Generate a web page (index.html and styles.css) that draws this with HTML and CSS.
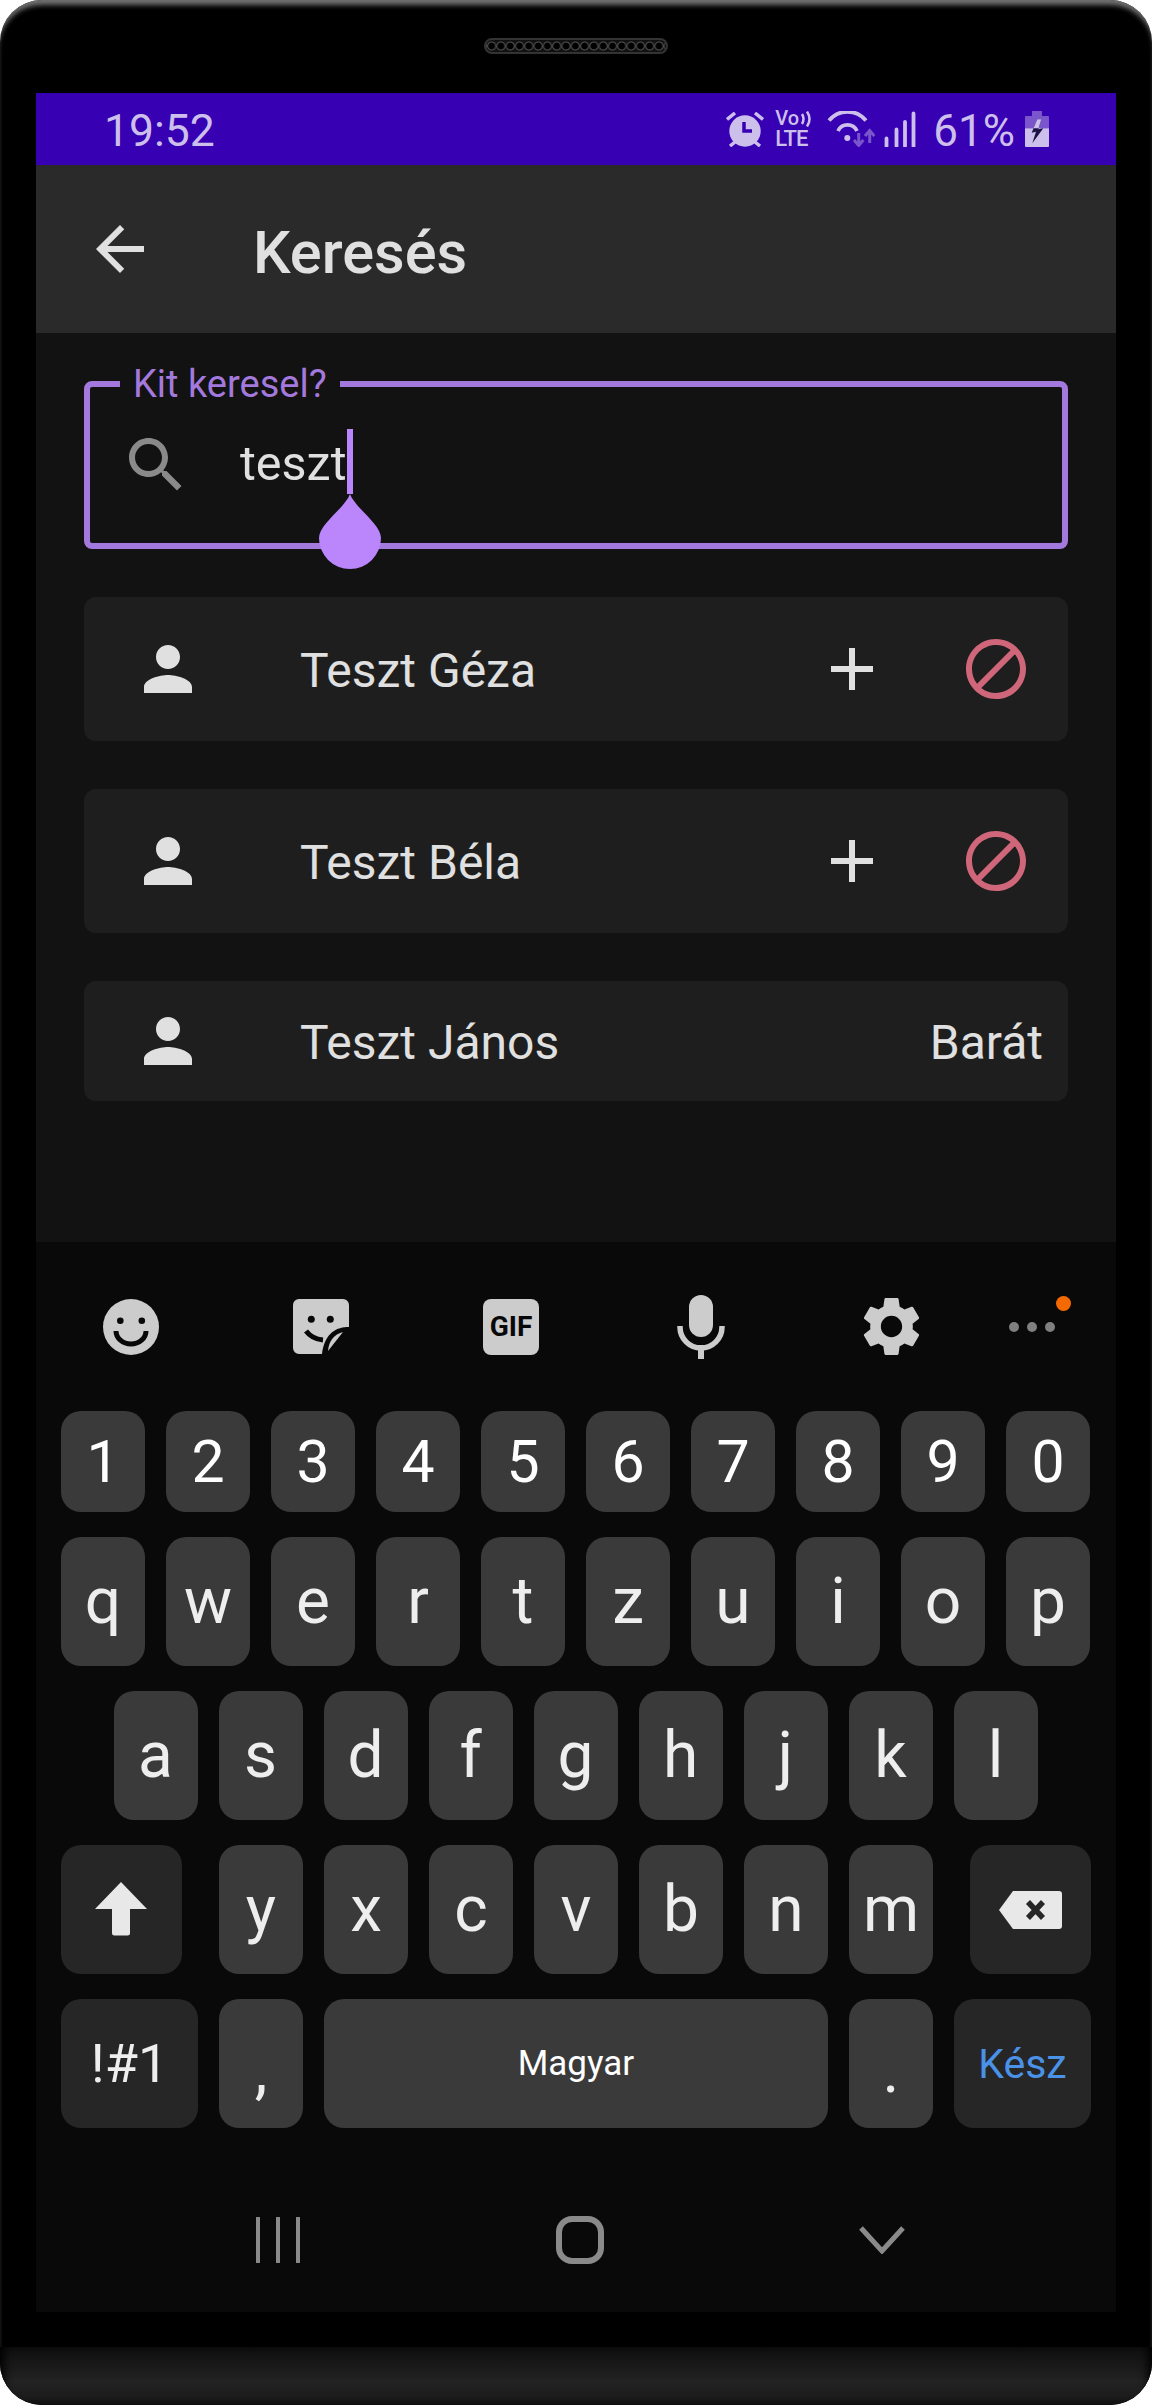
FILE: index.html
```html
<!DOCTYPE html>
<html lang="hu">
<head>
	<meta charset="UTF-8">
	<title>Keresés</title>
	<link rel="stylesheet" href="styles.css">
</head>
<body>
	<div class="phone">
		<div class="bezel-top"><div class="speaker"></div></div>
		<div class="screen">
			<div class="status">
				<span class="status-time">19:52</span>
				<svg class="ic-alarm" width="38" height="35" viewBox="0 0 38 35">
					<circle cx="19" cy="19" r="15.7" fill="#cdbfec"/>
					<path d="M18 10v9h8" fill="none" stroke="#3700b3" stroke-width="3.5"/>
					<path d="M1 7.5 9 1M29 1l8 6.5M4 34l5-4M34 34l-5-4" fill="none" stroke="#cdbfec" stroke-width="3.5"/>
				</svg>
				<div class="volte">
					<div class="volte-top">
						<span class="volte-vo">Vo</span>
						<svg width="14" height="16" viewBox="0 0 14 16"><path d="M3 3q3 5 0 10M8 .5q5 7.500 0 15" fill="none" stroke="#cdbfec" stroke-width="2.500"/></svg>
					</div>
					<span class="volte-lte">LTE</span>
				</div>
				<svg class="ic-wifi" width="48" height="36" viewBox="0 0 48 36">
					<path d="M2 9.500A24 24 0 0 1 39 9.500M11 20A10.500 10.500 0 0 1 30 20" fill="none" stroke="#cdbfec" stroke-width="3.800"/>
					<circle cx="20.300" cy="27" r="3" fill="#cdbfec"/>
					<path d="M31.700 22v12M27 29l4.700 5.500 4.700-5.500M42.700 32V20M38 25l4.700-5.500 4.700 5.500" fill="none" stroke="#7a55cc" stroke-width="3"/>
				</svg>
				<svg class="ic-signal" width="32" height="36" viewBox="0 0 32 36">
					<path d="M2.500 27.500V35M12.500 18.500V35M21 11V35M29.500 2.500V35" fill="none" stroke="#cdbfec" stroke-width="3.800" stroke-linecap="round"/>
				</svg>
				<span class="status-pct">61%</span>
				<svg class="ic-battery" width="24" height="36" viewBox="0 0 24 36">
					<path d="M7 0h10v5H7z" fill="#7a55cc"/>
					<path d="M1 5h22a1 1 0 0 1 1 1v11.300H0V6a1 1 0 0 1 1-1z" fill="#7a55cc"/>
					<path d="M0 17.300h24V35a1 1 0 0 1-1 1H1a1 1 0 0 1-1-1z" fill="#cdbfec"/>
					<path d="M12.300 8.300 6.700 21.700l4.300-1-3.700 11.600 11-15-5 1 3-10z" fill="#1d1245"/>
					<path d="M12.300 8.300h4l-2.700 9H8.500z" fill="#cdbfec"/>
				</svg>
			</div>
			<div class="appbar">
				<svg class="ic-back" width="72" height="72" viewBox="0 0 24 24"><path d="M20 11H7.830l5.590-5.590L12 4l-8 8 8 8 1.410-1.410L7.830 13H20v-2z"/></svg>
				<h1 class="appbar-title">Keresés</h1>
			</div>
			<div class="content">
				<div class="field">
					<span class="field-label">Kit keresel?</span>
					<svg class="ic-search" width="72" height="72" viewBox="0 0 24 24"><path d="M15.500 14h-.79l-.28-.27C15.410 12.590 16 11.110 16 9.500 16 5.910 13.090 3 9.500 3S3 5.910 3 9.500 5.910 16 9.500 16c1.610 0 3.090-.59 4.230-1.570l.27.28v.79l5 4.990L20.490 19l-4.990-5zm-6 0C7.010 14 5 11.990 5 9.500S7.010 5 9.500 5 14 7.010 14 9.500 11.990 14 9.500 14z"/></svg>
					<span class="field-text">teszt</span>
					<span class="caret">
						<svg class="caret-handle" width="62" height="75" viewBox="0 0 62 75"><path d="M31 0C36 14 62 30 62 44A31 31 0 1 1 0 44C0 30 26 14 31 0z"/></svg>
					</span>
				</div>

				<div class="row">
					<svg class="ic-person" width="72" height="72" viewBox="0 0 24 24"><path d="M12 12c2.210 0 4-1.790 4-4s-1.790-4-4-4-4 1.790-4 4 1.790 4 4 4zm0 2c-2.670 0-8 1.340-8 4v2h16v-2c0-2.660-5.330-4-8-4z"/></svg>
					<span class="row-name">Teszt Géza</span>
					<svg class="ic-add" width="72" height="72" viewBox="0 0 24 24"><path d="M19 13h-6v6h-2v-6H5v-2h6V5h2v6h6v2z"/></svg>
					<svg class="ic-block" width="72" height="72" viewBox="0 0 24 24"><path d="M12 2C6.480 2 2 6.480 2 12s4.480 10 10 10 10-4.480 10-10S17.520 2 12 2zM4 12c0-4.420 3.580-8 8-8 1.850 0 3.550.63 4.900 1.690L5.690 16.900C4.630 15.550 4 13.850 4 12zm8 8c-1.850 0-3.550-.63-4.900-1.690L18.310 7.100C19.370 8.450 20 10.150 20 12c0 4.420-3.580 8-8 8z"/></svg>
				</div>
				<div class="row">
					<svg class="ic-person" width="72" height="72" viewBox="0 0 24 24"><path d="M12 12c2.210 0 4-1.790 4-4s-1.790-4-4-4-4 1.790-4 4 1.790 4 4 4zm0 2c-2.670 0-8 1.340-8 4v2h16v-2c0-2.660-5.330-4-8-4z"/></svg>
					<span class="row-name">Teszt Béla</span>
					<svg class="ic-add" width="72" height="72" viewBox="0 0 24 24"><path d="M19 13h-6v6h-2v-6H5v-2h6V5h2v6h6v2z"/></svg>
					<svg class="ic-block" width="72" height="72" viewBox="0 0 24 24"><path d="M12 2C6.480 2 2 6.480 2 12s4.480 10 10 10 10-4.480 10-10S17.520 2 12 2zM4 12c0-4.420 3.580-8 8-8 1.850 0 3.550.63 4.900 1.690L5.690 16.900C4.630 15.550 4 13.850 4 12zm8 8c-1.850 0-3.550-.63-4.900-1.690L18.310 7.100C19.370 8.450 20 10.150 20 12c0 4.420-3.580 8-8 8z"/></svg>
				</div>
				<div class="row row-short">
					<svg class="ic-person" width="72" height="72" viewBox="0 0 24 24"><path d="M12 12c2.210 0 4-1.790 4-4s-1.790-4-4-4-4 1.790-4 4 1.790 4 4 4zm0 2c-2.670 0-8 1.340-8 4v2h16v-2c0-2.660-5.330-4-8-4z"/></svg>
					<span class="row-name">Teszt János</span>
					<span class="row-tag">Barát</span>
				</div>
			</div>

			<div class="keyboard">
				<div class="kb-tools">
					<div class="kb-tool">
						<svg width="56" height="56" viewBox="0 0 56 56">
							<circle cx="28" cy="28" r="28" fill="#ccc"/>
							<circle cx="17.300" cy="21.700" r="3.300" fill="#080808"/>
							<circle cx="38.800" cy="21.700" r="3.300" fill="#080808"/>
							<path d="M13 32a15 13 0 0 0 30 0" fill="none" stroke="#080808" stroke-width="5"/>
						</svg>
					</div>
					<div class="kb-tool">
						<svg width="56" height="56" viewBox="0 0 56 56">
							<path d="M6 0H50a6 6 0 0 1 6 6V28C44 28 32 33 29 55H6a6 6 0 0 1-6-6V6a6 6 0 0 1 6-6z" fill="#ccc"/>
							<circle cx="18.300" cy="20.300" r="3.500" fill="#080808"/>
							<circle cx="37.300" cy="20.300" r="3.500" fill="#080808"/>
							<path d="M13 32Q19 40 30 41" fill="none" stroke="#080808" stroke-width="5"/>
							<path d="M35 52C36 42 40 36 50 33z" fill="#ccc"/>
						</svg>
					</div>
					<div class="kb-tool"><span class="gif">GIF</span></div>
					<div class="kb-tool">
						<svg width="48" height="64" viewBox="0 0 48 64">
							<rect x="12" y="0" width="24" height="42" rx="12" fill="#ccc"/>
							<path d="M3 31v1a21 21 0 0 0 42 0v-1" fill="none" stroke="#ccc" stroke-width="5.500"/>
							<rect x="21" y="50" width="6" height="14" fill="#ccc"/>
						</svg>
					</div>
					<div class="kb-tool">
						<svg class="ic-gear" width="71" height="71" viewBox="0 0 24 24"><path d="M19.140 12.940c.04-.3.06-.61.06-.94 0-.32-.02-.64-.07-.94l2.030-1.580c.18-.14.23-.41.12-.61l-1.920-3.320c-.12-.22-.37-.29-.59-.22l-2.390.96c-.5-.38-1.030-.7-1.620-.94l-.36-2.540c-.04-.24-.24-.41-.48-.41h-3.840c-.24 0-.43.17-.47.41l-.36 2.540c-.59.24-1.130.57-1.620.94l-2.390-.96c-.22-.08-.47 0-.59.22L2.740 8.870c-.12.21-.08.47.12.61l2.030 1.580c-.05.3-.09.63-.09.94s.02.64.07.94l-2.030 1.580c-.18.14-.23.41-.12.61l1.920 3.320c.12.22.37.29.59.22l2.390-.96c.5.38 1.030.7 1.620.94l.36 2.540c.05.24.24.41.48.41h3.840c.24 0 .44-.17.47-.41l.36-2.540c.59-.24 1.130-.56 1.620-.94l2.390.96c.22.08.47 0 .59-.22l1.920-3.320c.12-.22.07-.47-.12-.61l-2.010-1.580zM12 15.600c-1.980 0-3.600-1.620-3.600-3.600s1.620-3.600 3.600-3.600 3.600 1.620 3.600 3.600-1.620 3.600-3.600 3.600z"/></svg>
					</div>
					<div class="kb-more">
						<i class="dot"></i><i class="dot"></i><i class="dot"></i>
						<i class="dot-new"></i>
					</div>
				</div>

				<div class="kb-keys">
					<div class="kb-row kb-row-num">
						<div class="key">1</div><div class="key">2</div><div class="key">3</div><div class="key">4</div><div class="key">5</div>
						<div class="key">6</div><div class="key">7</div><div class="key">8</div><div class="key">9</div><div class="key">0</div>
					</div>
					<div class="kb-row">
						<div class="key">q</div><div class="key">w</div><div class="key">e</div><div class="key">r</div><div class="key">t</div>
						<div class="key">z</div><div class="key">u</div><div class="key">i</div><div class="key">o</div><div class="key">p</div>
					</div>
					<div class="kb-row kb-row-mid">
						<div class="key">a</div><div class="key">s</div><div class="key">d</div><div class="key">f</div><div class="key">g</div>
						<div class="key">h</div><div class="key">j</div><div class="key">k</div><div class="key">l</div>
					</div>
					<div class="kb-row">
						<div class="key key-fn key-shift">
							<svg width="52" height="54" viewBox="0 0 52 54"><path d="M26 0 52 27H35V51a2.500 2.500 0 0 1-2.500 2.500h-13A2.500 2.500 0 0 1 17 51V27H0z" fill="#e8e8e8"/></svg>
						</div>
						<div class="key">y</div><div class="key">x</div><div class="key">c</div><div class="key">v</div><div class="key">b</div><div class="key">n</div><div class="key">m</div>
						<div class="key key-fn key-back">
							<svg width="63" height="38" viewBox="0 0 63 38">
								<path d="M14 0H60a3 3 0 0 1 3 3V35a3 3 0 0 1-3 3H14L0 19z" fill="#e8e8e8"/>
								<path d="M29 11 44 27M44 11 29 27" fill="none" stroke="#262626" stroke-width="5.500"/>
							</svg>
						</div>
					</div>
					<div class="kb-row">
						<div class="key key-fn key-sym">!#1</div>
						<div class="key key-low">,</div>
						<div class="key key-space">Magyar</div>
						<div class="key key-low">.</div>
						<div class="key key-fn key-done">Kész</div>
					</div>
				</div>

				<div class="kb-nav">
					<div class="nav-cell">
						<svg width="46" height="46" viewBox="0 0 46 46"><path d="M3 1V45M23 1V45M43 1V45" fill="none" stroke="#8a8a8a" stroke-width="4" stroke-linecap="round"/></svg>
					</div>
					<div class="nav-cell"><span class="nav-home"></span></div>
					<div class="nav-cell">
						<svg width="48" height="28" viewBox="0 0 48 28"><path d="M3 2 24 25 45 2" fill="none" stroke="#8a8a8a" stroke-width="5"/></svg>
					</div>
				</div>
			</div>
		</div>
		<div class="chin"></div>
	</div>
</body>
</html>
```

FILE: styles.css
```css
*{margin:0;padding:0;box-sizing:border-box;}
body{
	background:#fff;
	font-family:Roboto,"Noto Sans",sans-serif;
}
.phone{
	width:1152px;
	height:2405px;
	background:#000;
	border-radius:42px;
	overflow:hidden;
	box-shadow:inset 0 7px 5px -2px #707070;
}
.bezel-top{
	height:93px;
	padding-top:38px;
	display:flex;
	justify-content:center;
}
.speaker{
	width:184px;
	height:16px;
	border-radius:8px;
	border:2px solid #333;
	background:radial-gradient(circle at center,#000 3px,#555 4px,#111 5px) 1px 0/9.3px 12px repeat-x;
}
.screen{
	height:2219px;
	margin:0 36px;
	display:flex;
	flex-direction:column;
}

/* status bar */
.status{
	height:72px;
	background:#3700b3;
	color:#cdbfec;
	display:flex;
	align-items:center;
	padding-right:67px;
	font-size:44px;
}
.status-time{
	margin-left:68px;
	margin-right:auto;
	padding-top:4px;
	font-size:44.5px;
}
.status-pct{
	padding-top:4px;
	margin-left:17px;
	margin-right:10px;
}
.volte{
	width:37px;
	height:36px;
	margin-left:11px;
	display:flex;
	flex-direction:column;
	align-items:flex-start;
}
.volte-top{
	display:flex;
	align-items:center;
	height:15px;
	margin-bottom:4px;
}
.volte-vo{
	font-size:20px;
	font-weight:500;
	line-height:15px;
}
.volte-lte{
	font-size:22px;
	font-weight:500;
	line-height:18px;
	letter-spacing:-1px;
}
.ic-wifi{margin-left:15px;}
.ic-signal{margin-left:9px;}

/* app bar */
.appbar{
	height:168px;
	background:#2a2a2a;
	display:flex;
	align-items:center;
	padding-left:48px;
}
.ic-back{fill:#e0e0e0;}
.appbar-title{
	margin-left:97px;
	font-size:59.5px;
	font-weight:500;
	color:#e0e0e0;
	padding-top:8px;
}

/* content */
.content{
	flex:1;
	background:#121212;
	padding:48px;
	display:flex;
	flex-direction:column;
	gap:48px;
}
.field{
	position:relative;
	height:168px;
	border:6px solid #a479dd;
	border-radius:8px;
	display:flex;
	align-items:center;
	padding-left:30px;
}
.field-label{
	position:absolute;
	left:30px;
	top:-21px;
	padding:0 13px;
	background:#121212;
	color:#a479dd;
	font-size:38px;
	line-height:36px;
}
.ic-search{fill:#8a8a8a;}
.field-text{
	margin-left:48px;
	padding-bottom:3px;
	font-size:48.5px;
	color:#e0e0e0;
}
.caret{
	position:relative;
	width:6px;
	height:65px;
	margin-bottom:7px;
	background:#bb86fc;
}
.caret-handle{
	position:absolute;
	left:-28px;
	top:65px;
	fill:#bb86fc;
}
.row{
	height:144px;
	background:#1e1e1e;
	border-radius:12px;
	display:flex;
	align-items:center;
	padding:0 36px 0 48px;
}
.row-short{
	height:120px;
	padding-right:25px;
}
.ic-person{fill:#e0e0e0;}
.row-name{
	flex:1;
	margin-left:96px;
	padding-top:3px;
	font-size:48px;
	color:#e0e0e0;
}
.row-tag{
	padding-top:3px;
	font-size:48px;
	color:#e0e0e0;
}
.ic-add{fill:#e0e0e0;}
.ic-block{
	margin-left:72px;
	fill:#cf6679;
}

/* keyboard */
.keyboard{
	height:1070px;
	background:#090909;
	display:flex;
	flex-direction:column;
}
.kb-tools{
	height:169px;
	display:flex;
	align-items:center;
}
.kb-tool{
	width:190px;
	display:flex;
	justify-content:center;
	align-items:center;
}
.gif{
	width:56px;
	height:56px;
	border-radius:8px;
	background:#ccc;
	color:#080808;
	font-size:28px;
	font-weight:700;
	line-height:56px;
	text-align:center;
}
.ic-gear{fill:#ccc;}
.kb-more{
	position:relative;
	margin-left:23px;
	display:flex;
	gap:8px;
}
.dot{
	width:10px;
	height:10px;
	border-radius:50%;
	background:#808080;
}
.dot-new{
	position:absolute;
	left:47px;
	top:-26px;
	width:15px;
	height:15px;
	border-radius:50%;
	background:#f56a00;
}
.kb-keys{
	padding:0 25px;
	display:flex;
	flex-direction:column;
	gap:25px;
}
.kb-row{
	height:129px;
	display:flex;
	gap:21px;
}
.kb-row-num{height:101px;}
.kb-row-mid{padding-left:52.5px;}
.key{
	width:84px;
	border-radius:20px;
	background:#3a3a3a;
	color:#eee;
	font-size:64px;
	display:flex;
	justify-content:center;
	align-items:center;
}
.kb-row-num .key{
	font-size:59px;
	color:#fff;
}
.key-fn{background:#262626;}
.key-shift{
	width:121px;
	margin-right:16px;
}
.key-shift svg{margin-bottom:1px;margin-right:1px;}
.key-back{
	width:121px;
	margin-left:16px;
}
.key-sym{
	width:137px;
	font-size:54px;
}
.key-low{padding-top:14px;}
.key-space{
	flex:1;
	font-size:35px;
	color:#fff;
}
.key-done{
	width:137px;
	font-size:41px;
	color:#4a92e8;
}
.kb-nav{
	flex:1;
	display:flex;
	align-items:center;
	padding:40px 0 0 91px;
}
.nav-cell{
	width:302px;
	display:flex;
	justify-content:center;
}
.nav-home{
	width:48px;
	height:48px;
	border:6px solid #8a8a8a;
	border-radius:16px;
}

/* bottom of the phone body */
.chin{
	height:58px;
	margin-top:35px;
	background:linear-gradient(#0e0e0e,#232323 60%,#1c1c1c 85%,#111);
	box-shadow:inset 10px 0 10px -6px #000,inset -10px 0 10px -6px #000;
}
```
